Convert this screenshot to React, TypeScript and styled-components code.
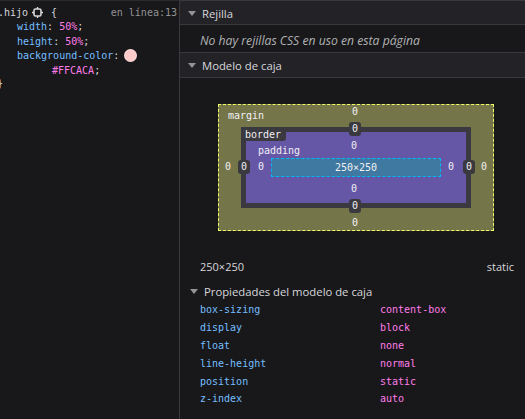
import React from "react";
import styled, { createGlobalStyle } from "styled-components";

const Global = createGlobalStyle`
  html, body { margin: 0; padding: 0; background: #18181a; }
  body { width: 525px; height: 419px; overflow: hidden; }
  #root { height: 419px; }
`;

const mono = `"DejaVu Sans Mono", "Liberation Mono", monospace`;
const sans = `"Open Sans", "Noto Sans", sans-serif`;

const Page = styled.div`
  display: flex;
  width: 525px;
  height: 419px;
  background: #18181a;
  overflow: hidden;
`;

const RulesPane = styled.div`
  width: 180px;
  flex: none;
  border-right: 1px solid #38383d;
  border-top: 1px solid #2a2a2e;
  box-sizing: border-box;
  padding-top: 4px;
  font-family: ${mono};
  font-size: 10px;
  color: #d7d7db;
  overflow: hidden;
`;

const CodeLine = styled.div<{ $indent?: number }>`
  display: flex;
  align-items: center;
  height: 14.5px;
  white-space: nowrap;
  padding-left: ${(p) => p.$indent ?? 0}px;
  margin-left: -2px;
`;

const Selector = styled.span`
  color: #d7d7db;
`;

const Source = styled.span`
  margin-left: auto;
  padding-right: 2px;
  color: #939395;
`;

const Prop = styled.span`
  color: #75bfff;
`;

const Val = styled.span`
  color: #ff7de9;
`;

const Punct = styled.span`
  color: #d7d7db;
`;

const Swatch = styled.span<{ $color: string }>`
  display: inline-block;
  width: 11px;
  height: 11px;
  border-radius: 50%;
  background: ${(p) => p.$color};
  border: 1px solid rgba(255, 255, 255, 0.35);
  margin-left: 5px;
`;

const HighlighterIcon = () => (
  <svg width="11" height="11" viewBox="0 0 11 11" style={{ margin: "0 8px 0 4px" }}>
    <rect x="2" y="2" width="7" height="7" rx="1.5" fill="none" stroke="#d7d7db" strokeWidth="1.6" />
    <line x1="5.5" y1="0" x2="5.5" y2="2" stroke="#d7d7db" strokeWidth="1.4" />
    <line x1="5.5" y1="9" x2="5.5" y2="11" stroke="#d7d7db" strokeWidth="1.4" />
    <line x1="0" y1="5.5" x2="2" y2="5.5" stroke="#d7d7db" strokeWidth="1.4" />
    <line x1="9" y1="5.5" x2="11" y2="5.5" stroke="#d7d7db" strokeWidth="1.4" />
  </svg>
);

const LayoutPane = styled.div`
  flex: 1;
  display: flex;
  flex-direction: column;
  font-family: ${sans};
  font-size: 11.3px;
  color: #b1b1b3;
  min-width: 0;
`;

const SectionHeader = styled.div<{ $first?: boolean }>`
  display: flex;
  align-items: center;
  height: 25px;
  box-sizing: border-box;
  padding-left: 7px;
  padding-top: 1px;
  background: #232327;
  border-top: ${(p) => (p.$first ? "1px solid #38383d" : "none")};
  border-bottom: 1px solid #38383d;
  color: #d7d7db;
  font-size: 11.3px;
`;

const Twisty = styled.span`
  width: 0;
  height: 0;
  border-left: 4px solid transparent;
  border-right: 4px solid transparent;
  border-top: 5px solid #939395;
  margin-right: 6px;
  margin-left: 1px;
`;

const EmptyNote = styled.div`
  height: 28px;
  box-sizing: border-box;
  display: flex;
  align-items: center;
  padding-left: 20px;
  padding-top: 3px;
  font-style: italic;
  font-size: 12.2px;
  color: #b1b1b3;
  border-bottom: 1px solid #38383d;
`;

const BoxArea = styled.div`
  padding: 26px 0 0 38px;
  font-family: ${mono};
  font-size: 10px;
  color: #f0f0f4;
`;

const MarginBox = styled.div`
  position: relative;
  width: 230px;
  box-sizing: content-box;
  padding: 22px;
  background: #75754a;
  border: 1px dashed #edff64;
`;

const BorderBox = styled.div`
  position: relative;
  border: 5px solid #3a393f;
  background: #6657a6;
  width: 220px;
`;

const PaddingBox = styled.div`
  position: relative;
  padding: 26px 25px;
  height: 19px;
`;

const ContentBox = styled.div`
  height: 17px;
  border: 1px dashed #00b6f7;
  background: #3f78a0;
  display: flex;
  align-items: center;
  justify-content: center;
`;

const BoxLabel = styled.span<{ $x: number; $y: number }>`
  position: absolute;
  left: ${(p) => p.$x}px;
  top: ${(p) => p.$y}px;
  line-height: 12px;
`;

const BorderLabel = styled.span`
  position: absolute;
  z-index: 2;
  left: -5px;
  top: -3px;
  padding: 0 5px 0 4px;
  height: 12px;
  line-height: 12px;
  background: #3a393f;
  border-bottom-right-radius: 3px;
`;

const Num = styled.span<{ $x: number; $y: number }>`
  position: absolute;
  z-index: 2;
  left: ${(p) => p.$x}px;
  top: ${(p) => p.$y}px;
  transform: translate(-50%, -50%);
  line-height: 12px;
`;

const Badge = styled(Num)`
  background: #3a393f;
  border-radius: 3px;
  padding: 1px 3px;
`;

const SizeRow = styled.div`
  display: flex;
  justify-content: space-between;
  padding: 0 11px 0 20px;
  margin-top: 28px;
  color: #d7d7db;
  font-size: 11px;
`;

const PropsHeader = styled.div`
  display: flex;
  align-items: center;
  padding-left: 9px;
  margin-top: 7px;
  height: 20px;
  color: #d7d7db;
  font-size: 11.3px;
`;

const PropList = styled.div`
  font-family: ${mono};
  font-size: 10px;
`;

const PropRow = styled.div`
  display: grid;
  grid-template-columns: 180px 1fr;
  height: 17.8px;
  align-items: center;
  padding-left: 20px;
`;

const computed: [string, string][] = [
  ["box-sizing", "content-box"],
  ["display", "block"],
  ["float", "none"],
  ["line-height", "normal"],
  ["position", "static"],
  ["z-index", "auto"],
];

export default function App() {
  return (
    <>
      <Global />
      <Page>
        <RulesPane>
          <CodeLine>
            <Selector>.hijo</Selector>
            <HighlighterIcon />
            <Punct>{"{"}</Punct>
            <Source>en línea:13</Source>
          </CodeLine>
          <CodeLine $indent={19}>
            <Prop>width</Prop>
            <Punct>:&nbsp;</Punct>
            <Val>50%</Val>
            <Punct>;</Punct>
          </CodeLine>
          <CodeLine $indent={19}>
            <Prop>height</Prop>
            <Punct>:&nbsp;</Punct>
            <Val>50%</Val>
            <Punct>;</Punct>
          </CodeLine>
          <CodeLine $indent={19}>
            <Prop>background-color</Prop>
            <Punct>:</Punct>
            <Swatch $color="#FFCACA" />
          </CodeLine>
          <CodeLine $indent={54}>
            <Val>#FFCACA</Val>
            <Punct>;</Punct>
          </CodeLine>
          <CodeLine style={{ marginLeft: -3, height: 11 }}>
            <Punct>{"}"}</Punct>
          </CodeLine>
        </RulesPane>

        <LayoutPane>
          <SectionHeader $first>
            <Twisty />
            Rejilla
          </SectionHeader>
          <EmptyNote>No hay rejillas CSS en uso en esta página</EmptyNote>
          <SectionHeader>
            <Twisty />
            Modelo de caja
          </SectionHeader>

          <BoxArea>
            <MarginBox>
              <BoxLabel $x={9} $y={5}>margin</BoxLabel>
              <Num $x={136} $y={7}>0</Num>
              <Badge $x={136} $y={24}>0</Badge>
              <Num $x={9} $y={62}>0</Num>
              <Badge $x={25} $y={62}>0</Badge>
              <Badge $x={250} $y={62}>0</Badge>
              <Num $x={265} $y={62}>0</Num>
              <Badge $x={136} $y={101}>0</Badge>
              <Num $x={136} $y={118}>0</Num>
              <BorderBox>
                <BorderLabel>border</BorderLabel>
                <PaddingBox>
                  <BoxLabel $x={12} $y={13}>padding</BoxLabel>
                  <Num $x={108} $y={14}>0</Num>
                  <Num $x={15} $y={35}>0</Num>
                  <Num $x={205} $y={35}>0</Num>
                  <Num $x={108} $y={57}>0</Num>
                  <ContentBox>250×250</ContentBox>
                </PaddingBox>
              </BorderBox>
            </MarginBox>
          </BoxArea>

          <SizeRow>
            <span>250×250</span>
            <span>static</span>
          </SizeRow>

          <PropsHeader>
            <Twisty />
            Propiedades del modelo de caja
          </PropsHeader>
          <PropList>
            {computed.map(([k, v]) => (
              <PropRow key={k}>
                <Prop>{k}</Prop>
                <Val>{v}</Val>
              </PropRow>
            ))}
          </PropList>
        </LayoutPane>
      </Page>
    </>
  );
}
